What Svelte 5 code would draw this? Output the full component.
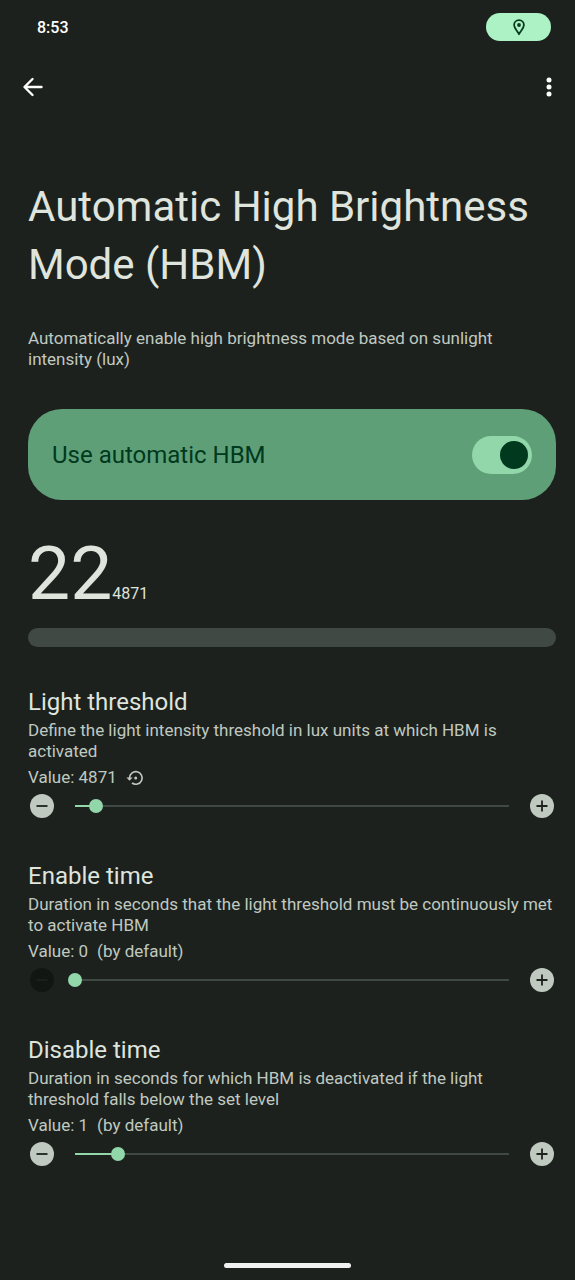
<script>
  let enabled = $state(true);
  const lux = 22;

  let settings = $state([
    {
      id: 'threshold',
      title: 'Light threshold',
      summary: 'Define the light intensity threshold in lux units at which HBM is activated',
      value: 4871,
      initial: 6000,
      max: 100000,
      step: 1
    },
    {
      id: 'enable',
      title: 'Enable time',
      summary: 'Duration in seconds that the light threshold must be continuously met to activate HBM',
      value: 0,
      initial: 0,
      max: 10,
      step: 1
    },
    {
      id: 'disable',
      title: 'Disable time',
      summary: 'Duration in seconds for which HBM is deactivated if the light threshold falls below the set level',
      value: 1,
      initial: 1,
      max: 10,
      step: 1
    }
  ]);

  let threshold = $derived(settings[0].value);
  let level = $derived(Math.min(100, Math.floor((lux / threshold) * 100)));
</script>

<div class="screen">
  <div class="status">
    <span>8:53</span>
    <div class="privacy">
      <svg width="12" height="17" viewBox="0 0 12 17" fill="none">
        <path d="M6 1.200C3.200 1.200 1.100 3.300 1.100 6.100c0 3.200 3.200 5.500 4.900 9.100 1.700-3.600 4.900-5.900 4.900-9.100 0-2.800-2.100-4.900-4.900-4.900z" stroke="#0b3a1e" stroke-width="1.800" stroke-linejoin="round" />
        <circle cx="6" cy="6" r="1.900" fill="#0b3a1e" />
      </svg>
    </div>
  </div>

  <header>
    <button class="icon" aria-label="Back">
      <svg width="22" height="22" viewBox="0 0 22 22" fill="none" stroke="#fff" stroke-width="2.400" stroke-linecap="round" stroke-linejoin="round">
        <path d="M19.500 11H3M10.500 3 2.500 11l8 8" />
      </svg>
    </button>
    <button class="icon" aria-label="More options">
      <svg width="22" height="22" viewBox="0 0 22 22" fill="#fff">
        <circle cx="11" cy="4" r="2.500" />
        <circle cx="11" cy="11" r="2.500" />
        <circle cx="11" cy="18" r="2.500" />
      </svg>
    </button>
  </header>

  <main>
    <h1>Automatic High Brightness Mode (HBM)</h1>
    <p class="intro">Automatically enable high brightness mode based on sunlight intensity (lux)</p>

    <label class="main-switch">
      <span>Use automatic HBM</span>
      <input type="checkbox" role="switch" bind:checked={enabled} />
    </label>

    <div class="reading">
      <span class="lux">{lux}</span>
      <span class="limit">{threshold}</span>
    </div>
    <progress max="100" value={level} aria-label="Current light level"></progress>

    {#each settings as item}
      <section>
        <h2><label for={item.id}>{item.title}</label></h2>
        <p>{item.summary}</p>
        <div class="value">
          <span>Value: {item.value}</span>
          {#if item.value === item.initial}
            <span>(by default)</span>
          {:else}
            <button aria-label="Reset" onclick={() => (item.value = item.initial)}>
              <svg width="18" height="16" viewBox="0 0 18 16" fill="none">
                <path d="M3.500 8A6.300 6.300 0 1 1 6 13" stroke="#c0c9c0" stroke-width="1.600" />
                <path d="M.4 7.500h6.200L3.500 10.800z" fill="#c0c9c0" />
                <circle cx="9.700" cy="8" r="1.500" fill="#c0c9c0" />
              </svg>
            </button>
          {/if}
        </div>
        <div class="slider">
          <button
            class="round"
            aria-label="Decrease"
            disabled={item.value <= 0}
            onclick={() => (item.value -= item.step)}
          >
            <svg width="12" height="12" viewBox="0 0 12 12" stroke="currentColor" stroke-width="1.800">
              <path d="M0.500 6h11" />
            </svg>
          </button>
          <input
            id={item.id}
            type="range"
            min="0"
            max={item.max}
            step={item.step}
            bind:value={item.value}
            style="--fill: {item.value / item.max}"
          />
          <button
            class="round"
            aria-label="Increase"
            disabled={item.value >= item.max}
            onclick={() => (item.value += item.step)}
          >
            <svg width="12" height="12" viewBox="0 0 12 12" stroke="currentColor" stroke-width="1.800">
              <path d="M0.500 6h11M6 0.500v11" />
            </svg>
          </button>
        </div>
      </section>
    {/each}
  </main>

  <div class="home"></div>
</div>

<style>
  :global(body) {
    background: #1c211e;
  }

  .screen {
    min-height: 100vh;
    box-sizing: border-box;
    display: flex;
    flex-direction: column;
    background: #1c211e;
    color: #dfe4dd;
    font-family: 'Google Sans', Roboto, sans-serif;
  }

  h1, h2, p {
    margin: 0;
    font-weight: 400;
  }

  button {
    padding: 0;
    border: 0;
    background: none;
    display: flex;
    align-items: center;
    justify-content: center;
    cursor: pointer;
  }

  .status {
    display: flex;
    align-items: center;
    justify-content: space-between;
    height: 54px;
    padding: 0 24px 0 37px;
    font-size: 16px;
    font-weight: 500;
    color: #fff;
  }

  .privacy {
    display: flex;
    align-items: center;
    justify-content: center;
    width: 65px;
    height: 28px;
    border-radius: 14px;
    background: #adf2c4;
  }

  header {
    display: flex;
    align-items: center;
    justify-content: space-between;
    height: 66px;
    padding: 0 10px 0 17px;
  }

  .icon {
    width: 32px;
    height: 32px;
  }

  main {
    flex: 1;
    padding: 58px 19px 32px 28px;
  }

  h1 {
    font-size: 42px;
    line-height: 58px;
  }

  p, .value {
    font-size: 17px;
    line-height: 21px;
    color: #c0c9c0;
  }

  .intro {
    margin-top: 34px;
  }

  .main-switch {
    display: flex;
    align-items: center;
    justify-content: space-between;
    height: 91px;
    margin-top: 39px;
    padding: 0 24px;
    border-radius: 34px;
    background: #5f9f78;
    color: #00391d;
    font-size: 24px;
  }

  .main-switch input {
    appearance: none;
    display: flex;
    align-items: center;
    width: 60px;
    height: 38px;
    margin: 0;
    padding: 0 4px;
    box-sizing: border-box;
    border-radius: 19px;
    background: #404943;
  }

  .main-switch input::before {
    content: '';
    width: 28px;
    height: 28px;
    border-radius: 50%;
    background: #00391d;
  }

  .main-switch input:checked {
    justify-content: flex-end;
    background: #92d7aa;
  }

  .reading {
    display: flex;
    align-items: baseline;
    height: 84px;
    margin-top: 31px;
  }

  .lux {
    font-size: 75px;
    line-height: 84px;
  }

  .limit {
    font-size: 16px;
  }

  progress {
    appearance: none;
    display: block;
    width: 100%;
    height: 19px;
    margin-top: 13px;
    border: 0;
    border-radius: 10px;
    overflow: hidden;
    background: #404943;
  }

  progress::-webkit-progress-bar {
    background: #404943;
  }

  progress::-webkit-progress-value {
    background: #92d7aa;
  }

  section {
    margin-top: 41px;
  }

  h2 {
    font-size: 24px;
    line-height: 28px;
  }

  section p {
    margin-top: 4px;
  }

  .value {
    display: flex;
    align-items: center;
    gap: 9px;
    margin-top: 5px;
  }

  .slider {
    display: flex;
    align-items: center;
    justify-content: space-between;
    height: 30px;
    padding: 0 2px;
    margin-top: 3px;
  }

  .round {
    flex: none;
    width: 24px;
    height: 24px;
    border-radius: 50%;
    background: #c0c9c0;
    color: #1c211e;
  }

  .round:disabled {
    background: #121613;
    color: #1c211e;
    cursor: default;
  }

  .slider input {
    appearance: none;
    flex: 1;
    min-width: 0;
    height: 16px;
    margin: 0 14px;
    background: none;
  }

  .slider input::-webkit-slider-runnable-track {
    height: 2px;
    background: linear-gradient(
      to right,
      transparent 7px,
      #92d7aa 7px calc(7px + (100% - 14px) * var(--fill)),
      #404943 calc(7px + (100% - 14px) * var(--fill)) calc(100% - 7px),
      transparent calc(100% - 7px)
    );
  }

  .slider input::-webkit-slider-thumb {
    appearance: none;
    width: 14px;
    height: 14px;
    margin-top: -6px;
    border-radius: 50%;
    background: #92d7aa;
  }

  .home {
    align-self: center;
    width: 22%;
    height: 5px;
    margin-bottom: 12px;
    border-radius: 3px;
    background: #f1f1f1;
  }
</style>
